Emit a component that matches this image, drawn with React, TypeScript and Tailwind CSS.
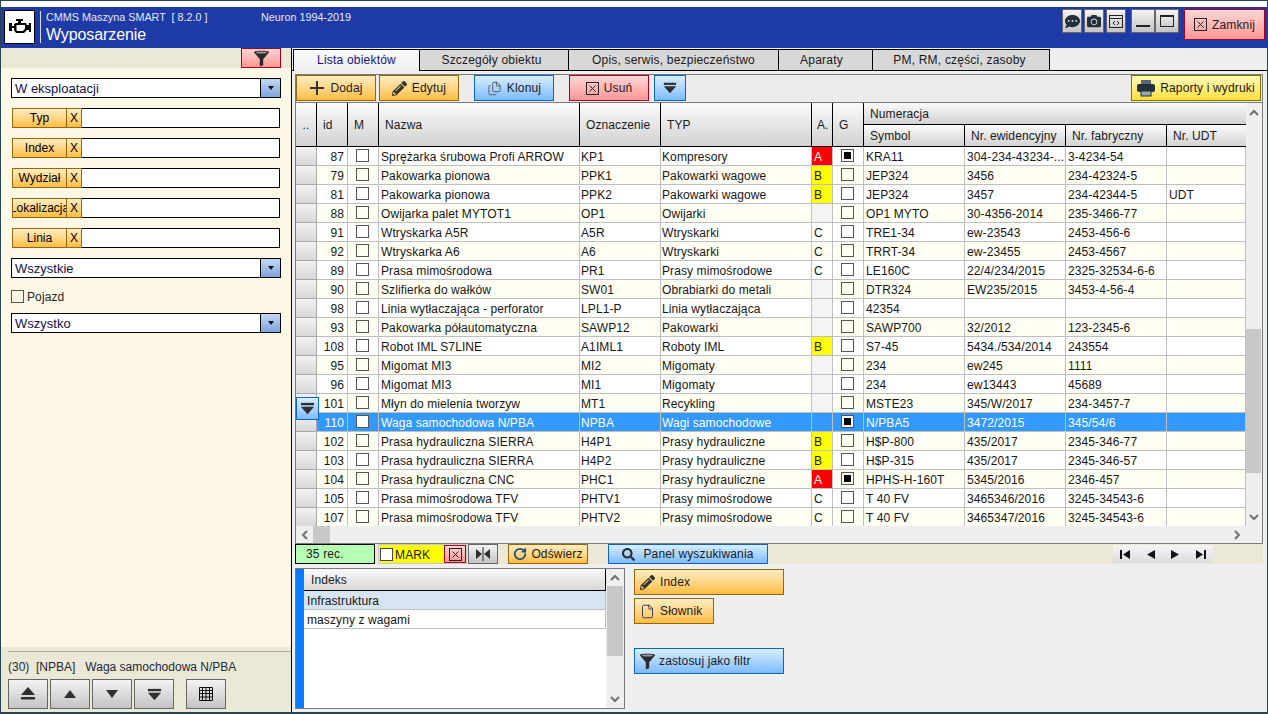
import { ReactNode } from 'react';
import { FaCamera, FaCommentDots, FaPencilAlt, FaSearch } from 'react-icons/fa';
import { File, Files, RotateCw } from 'lucide-react';

const orange = 'border border-[#96660f] bg-gradient-to-b from-[#ffedc0] to-[#ffbd3a]';
const blue = 'border border-[#0b66c2] bg-gradient-to-b from-[#d8eeff] to-[#7dbbff]';
const red = 'border border-[#a8001e] bg-gradient-to-b from-[#ffd6d6] to-[#ff9696]';
const gray = 'border border-[#666666] bg-gradient-to-b from-[#f4f4f4] to-[#c4c4c4]';
const headCell = 'border-r border-b border-black bg-gradient-to-b from-[#fbfbfb] to-[#d2d2d2] flex items-center whitespace-nowrap overflow-hidden';

const columns = 'grid grid-cols-[21px_31px_31px_201px_81px_151px_21px_31px_101px_101px_101px_79px]';

type Row = [string, string, string, string, string, boolean, string, string, string, string?];

const rows: Row[] = [
  ['87', 'Sprężarka śrubowa Profi ARROW', 'KP1', 'Kompresory', 'A', true, 'KRA11', '304-234-43234-...', '3-4234-54'],
  ['79', 'Pakowarka pionowa', 'PPK1', 'Pakowarki wagowe', 'B', false, 'JEP324', '3456', '234-42324-5'],
  ['81', 'Pakowarka pionowa', 'PPK2', 'Pakowarki wagowe', 'B', false, 'JEP324', '3457', '234-42344-5', 'UDT'],
  ['88', 'Owijarka palet MYTOT1', 'OP1', 'Owijarki', '', false, 'OP1 MYTO', '30-4356-2014', '235-3466-77'],
  ['91', 'Wtryskarka A5R', 'A5R', 'Wtryskarki', 'C', false, 'TRE1-34', 'ew-23543', '2453-456-6'],
  ['92', 'Wtryskarka A6', 'A6', 'Wtryskarki', 'C', false, 'TRRT-34', 'ew-23455', '2453-4567'],
  ['89', 'Prasa mimośrodowa', 'PR1', 'Prasy mimośrodowe', 'C', false, 'LE160C', '22/4/234/2015', '2325-32534-6-6'],
  ['90', 'Szlifierka do wałków', 'SW01', 'Obrabiarki do metali', '', false, 'DTR324', 'EW235/2015', '3453-4-56-4'],
  ['98', 'Linia wytłaczająca - perforator', 'LPL1-P', 'Linia wytłaczająca', '', false, '42354', '', ''],
  ['93', 'Pakowarka półautomatyczna', 'SAWP12', 'Pakowarki', '', false, 'SAWP700', '32/2012', '123-2345-6'],
  ['108', 'Robot IML S7LINE', 'A1IML1', 'Roboty IML', 'B', false, 'S7-45', '5434./534/2014', '243554'],
  ['95', 'Migomat MI3', 'MI2', 'Migomaty', '', false, '234', 'ew245', '1111'],
  ['96', 'Migomat MI3', 'MI1', 'Migomaty', '', false, '234', 'ew13443', '45689'],
  ['101', 'Młyn do mielenia tworzyw', 'MT1', 'Recykling', '', false, 'MSTE23', '345/W/2017', '234-3457-7'],
  ['110', 'Waga samochodowa N/PBA', 'NPBA', 'Wagi samochodowe', '', true, 'N/PBA5', '3472/2015', '345/54/6'],
  ['102', 'Prasa hydrauliczna SIERRA', 'H4P1', 'Prasy hydrauliczne', 'B', false, 'H$P-800', '435/2017', '2345-346-77'],
  ['103', 'Prasa hydrauliczna SIERRA', 'H4P2', 'Prasy hydrauliczne', 'B', false, 'H$P-315', '435/2017', '2345-346-57'],
  ['104', 'Prasa hydrauliczna CNC', 'PHC1', 'Prasy hydrauliczne', 'A', true, 'HPHS-H-160T', '5345/2016', '2346-457'],
  ['105', 'Prasa mimośrodowa TFV', 'PHTV1', 'Prasy mimośrodowe', 'C', false, 'T 40 FV', '3465346/2016', '3245-34543-6'],
  ['107', 'Prasa mimośrodowa TFV', 'PHTV2', 'Prasy mimośrodowe', 'C', false, 'T 40 FV', '3465347/2016', '3245-34543-6'],
];

function Funnel({ size = 20 }: { size?: number }) {
  return (
    <svg width={size} height={size} viewBox="0 0 20 20">
      <path d="M1 2.5 C1 0.5 19 0.5 19 2.5 L12 11 L12 18 L8 19.5 L8 11 Z" fill="#2b2b2b" />
      <ellipse cx="10" cy="3" rx="6.5" ry="1.2" fill="#9a9a9a" />
    </svg>
  );
}

function BoxX() {
  return (
    <svg width="13" height="13" viewBox="0 0 13 13" fill="none" stroke="#222222">
      <rect x="0.5" y="0.5" width="12" height="12" />
      <path d="M3.5 3.5 L9.5 9.5 M9.5 3.5 L3.5 9.5" />
    </svg>
  );
}

// bar + triangle, used for the "last" and dropdown buttons
function BarDown({ size = 16 }: { size?: number }) {
  return (
    <svg width={size} height={size} viewBox="0 0 16 16" fill="#2f2f2f">
      <rect x="1" y="2" width="14" height="2.5" />
      <path d="M1 6 H15 L8 14 Z" />
    </svg>
  );
}

function Tri({ dir }: { dir: 'up' | 'down' }) {
  return (
    <svg width="12" height="8" viewBox="0 0 12 8" fill="#2f2f2f">
      <path d={dir === 'up' ? 'M0 8 L6 0 L12 8 Z' : 'M0 0 H12 L6 8 Z'} />
    </svg>
  );
}

function Chevron({ dir }: { dir: 'up' | 'down' | 'left' | 'right' }) {
  const d = {
    up: 'M1 6 L5 2 L9 6',
    down: 'M1 2 L5 6 L9 2',
    left: 'M6 1 L2 5 L6 9',
    right: 'M2 1 L6 5 L2 9',
  }[dir];
  return (
    <svg width="10" height="10" viewBox="0 0 10 10" fill="none" stroke="#707070" strokeWidth="2">
      <path d={d} transform={dir === 'left' || dir === 'right' ? 'translate(1 0)' : 'translate(0 1)'} />
    </svg>
  );
}

function Printer() {
  return (
    <svg width="18" height="18" viewBox="0 0 18 18">
      <rect x="4" y="1" width="10" height="5" fill="#5c6670" />
      <rect x="0" y="5" width="18" height="8" rx="2" fill="#23303c" />
      <rect x="4" y="12" width="10" height="5" fill="#9aa4ae" stroke="#23303c" />
    </svg>
  );
}

function Check({ checked, white }: { checked?: boolean; white?: boolean }) {
  return (
    <span className={`w-[13px] h-[13px] shrink-0 border border-[#555555] flex items-center justify-center ${white ? 'bg-white' : ''}`}>
      {checked && <span className="w-[7px] h-[7px] bg-black" />}
    </span>
  );
}

function Select({ value }: { value: string }) {
  return (
    <div className="h-5 border border-black bg-white flex items-stretch text-[13px] leading-[19px]">
      <span className="flex-1 pl-[3px] text-[#10104a]">{value}</span>
      <span className="w-5 border-l border-black bg-gradient-to-b from-[#c4d8f4] to-[#7ea5df] flex items-center justify-center">
        <svg width="6" height="4" viewBox="0 0 6 4" fill="#111111"><path d="M0 0 H6 L3 4 Z" /></svg>
      </span>
    </div>
  );
}

function Filter({ label }: { label: string }) {
  return (
    <div className="h-5 mx-px flex items-stretch text-[12px] leading-[18px]">
      <span className={`w-[55px] ${orange} text-center overflow-hidden whitespace-nowrap flex justify-center`}>{label}</span>
      <span className={`w-[16px] -ml-px ${orange} text-center`}>X</span>
      <span className="flex-1 border border-black border-l-0 bg-white" />
    </div>
  );
}

function Btn({ cls, w, icon, children }: { cls: string; w: string; icon?: ReactNode; children?: ReactNode }) {
  return (
    <button className={`${cls} ${w} h-[26px] flex items-center justify-center gap-[5px] text-[12px] tracking-[0.15px] text-[#1a1a1a]`}>
      {icon}
      {children}
    </button>
  );
}

function SideBtn({ children }: { children: ReactNode }) {
  return <button className={`${gray} w-10 h-[30px] flex items-center justify-center`}>{children}</button>;
}

function Tab({ label, w, active }: { label: string; w: string; active?: boolean }) {
  return (
    <div
      className={`${w} border-t border-r border-black text-center leading-[20px] text-[12px] tracking-[0.2px] ${
        active
          ? 'h-[22px] -mb-px bg-gradient-to-b from-[#fbfbfb] to-[#efefef] text-[#14147c] relative'
          : 'h-[21px] bg-[#d8d8d8] text-[#1a1a1a]'
      }`}
    >
      {label}
    </div>
  );
}

function TableRow({ row, index }: { row: Row; index: number }) {
  const [id, name, mark, type, cat, g, symbol, ew, fab, udt] = row;
  const selected = id === '110';
  const rowCls = selected ? 'bg-[#3399ff] text-white' : index % 2 === 1 ? 'bg-[#fffff4] text-[#161616]' : 'bg-white text-[#161616]';
  const border = 'border-r border-b border-[#bfbfbf] whitespace-nowrap overflow-hidden';
  const cell = `${border} pl-[2px]`;
  const catCls =
    cat === 'A' ? 'bg-[#ff0000] text-white' : cat === 'B' ? 'bg-[#ffff00] text-[#161616]' : cat === '' && !selected ? 'bg-[#f4f4f4]' : '';
  return (
    <div className={`${columns} ${rowCls} h-[19px] text-[12px] leading-[20px] tracking-[0.1px]`}>
      <div className="border-r border-b border-[#a8a8a8] bg-gradient-to-b from-[#f2f2f2] to-[#d8d8d8]" />
      <div className={`${border} text-right pr-[3px]`}>{id}</div>
      <div className={`${border} flex items-start justify-center pt-[2px] pr-px`}><Check white={selected} /></div>
      <div className={cell}>{name}</div>
      <div className={`${border} pl-px`}>{mark}</div>
      <div className={`${border} pl-px`}>{type}</div>
      <div className={`${cell} ${catCls}`}>{cat}</div>
      <div className={`${border} flex items-start justify-center pt-[2px] pr-px`}><Check checked={g} white={selected} /></div>
      <div className={cell}>{symbol}</div>
      <div className={cell}>{ew}</div>
      <div className={cell}>{fab}</div>
      <div className={cell}>{udt}</div>
    </div>
  );
}

export default function App() {
  return (
    <div className="w-[1268px] h-[714px] box-border border-t border-l border-r border-b-2 border-[#26444f] flex flex-col overflow-hidden font-['Liberation_Sans',Arial,sans-serif] text-[12px] bg-white">
      <div className="h-[6px] bg-white" />

      {/* Title bar */}
      <header className="h-[41px] bg-[#1e3aa6] flex items-start text-white">
        <div className="w-[31px] h-[34px] ml-[3px] mt-[3px] bg-white border border-black flex items-center justify-center">
          <svg width="24" height="18" viewBox="0 0 24 18" fill="#000000">
            <path d="M8 1 H15 V3 H13 V5 H18 L19 7 H21 V5 H23 V14 H21 V12 H19 L16 15 H8 L6 12 V10 H4 V13 H1 V5 H4 V8 H6 V6 L8 5 H10 V3 H8 Z M8.5 7 V12.5 L9.5 13 H15 L17 10.5 V7 Z" fillRule="evenodd" />
          </svg>
        </div>
        <div className="w-px h-8 ml-[5px] mt-1 bg-[#d8dcec]" />
        <div className="ml-[5px] mt-[4px] w-[215px]">
          <div className="text-[10.8px] leading-[12px] text-[#e4e8f6] whitespace-pre">CMMS Maszyna SMART  [ 8.2.0 ]</div>
          <div className="text-[16px] leading-[20px] mt-[2px] tracking-[-0.1px]">Wyposarzenie</div>
        </div>
        <div className="mt-[4px] text-[10.8px] leading-[12px] text-[#e4e8f6]">Neuron 1994-2019</div>
        <div className="ml-auto mr-[2px] mt-[2px] flex items-start">
          <button className={`${gray} w-5 h-6 flex items-center justify-center`}><FaCommentDots size={15} color="#23303c" /></button>
          <button className={`${gray} w-5 h-6 ml-[2px] flex items-center justify-center`}><FaCamera size={14} color="#23303c" /></button>
          <button className={`${gray} w-5 h-6 ml-[2px] flex items-center justify-center`}>
            <svg width="14" height="13" viewBox="0 0 14 13" fill="none" stroke="#222222">
              <rect x="0.5" y="0.5" width="13" height="12" />
              <path d="M0.5 3.5 H13.5 M6 6 L4 8 L6 10 M8 6 L10 8 L8 10" />
            </svg>
          </button>
          <button className={`${gray} w-6 h-6 ml-[5px] flex items-center justify-center`}>
            <span className="w-[14px] h-[2px] bg-[#222222] mt-[10px]" />
          </button>
          <button className={`${gray} w-6 h-6 flex items-center justify-center`}>
            <span className="w-[14px] h-3 border border-[#222222] border-t-2" />
          </button>
          <button className={`${red} w-[81px] h-[31px] ml-[5px] flex items-center justify-center gap-[5px] text-[12px] tracking-[0.15px] text-[#222222]`}>
            <BoxX />
            Zamknij
          </button>
        </div>
      </header>

      <div className="flex-1 flex min-h-0">
        {/* Filter sidebar */}
        <aside className="w-[290px] flex flex-col bg-[#fdf8e6]">
          <div className="h-5 bg-[#ebe8d6] flex justify-end pr-[10px]">
            <button className={`${red} w-10 h-5 flex items-center justify-center`}><Funnel size={17} /></button>
          </div>
          <div className="flex-1 px-[10px] pt-[10px] flex flex-col gap-[10px]">
            <Select value="W eksploatacji" />
            <Filter label="Typ" />
            <Filter label="Index" />
            <Filter label="Wydział" />
            <Filter label="Lokalizacja" />
            <Filter label="Linia" />
            <Select value="Wszystkie" />
            <label className="h-[13px] mt-[2px] flex items-center gap-[3px] text-[12px] tracking-[0.1px] text-[#222222]">
              <Check />
              Pojazd
            </label>
            <Select value="Wszystko" />
          </div>
          <div className="h-[65px] bg-[#ebe8d6] pl-[7px] pt-1">
            <div className="h-px bg-[#a8a8a0]" />
            <div className="mt-[8px] h-[14px] leading-[14px] text-[12px] text-[#1e2840] whitespace-pre">(30)  [NPBA]   Waga samochodowa N/PBA</div>
            <div className="mt-[5px] flex gap-[2px]">
              <SideBtn>
                <svg width="14" height="14" viewBox="0 0 14 14" fill="#2f2f2f"><path d="M0 8 L7 0 L14 8 Z" /><rect y="10" width="14" height="2.5" /></svg>
              </SideBtn>
              <SideBtn><Tri dir="up" /></SideBtn>
              <SideBtn><Tri dir="down" /></SideBtn>
              <SideBtn><BarDown size={15} /></SideBtn>
              <button className={`${gray} w-10 h-[30px] ml-[10px] flex items-center justify-center`}>
                <svg width="14" height="14" viewBox="0 0 14 14" fill="none" stroke="#111111">
                  <path d="M0.5 0.5 H13.5 V13.5 H0.5 Z M0.5 3.5 H13.5 M0.5 6.5 H13.5 M0.5 10 H13.5 M3.5 0.5 V13.5 M7 0.5 V13.5 M10.5 0.5 V13.5" />
                </svg>
              </button>
            </div>
          </div>
        </aside>

        {/* Main panel */}
        <main className="flex-1 min-w-0 border-l border-black bg-[#efefef] flex flex-col">
          <div className="h-[23px] border-b border-black pl-px pt-px flex items-start">
            <Tab label="Lista obiektów" w="w-[127px] border-l" active />
            <Tab label="Szczegóły obiektu" w="w-[149px] pr-[5px]" />
            <Tab label="Opis, serwis, bezpieczeństwo" w="w-[210px]" />
            <Tab label="Aparaty" w="w-[94px] pr-[8px]" />
            <Tab label="PM, RM, części, zasoby" w="w-[177px] pr-[3px]" />
          </div>

          <div className="ml-[3px] mt-[3px] w-[968px] h-[470px] border border-[#7a7a7a] flex flex-col">
            {/* Toolbar */}
            <div className="h-[28px] border-b border-[#7a7a7a] bg-[#eeecea] flex items-start">
              <Btn cls={orange} w="w-20" icon={<svg width="16" height="16" viewBox="0 0 16 16" fill="#333333"><path d="M7 1 H9 V7 H15 V9 H9 V15 H7 V9 H1 V7 H7 Z" /></svg>}>Dodaj</Btn>
              <Btn cls={`${orange} ml-[3px]`} w="w-20" icon={<FaPencilAlt size={15} color="#333333" />}>Edytuj</Btn>
              <Btn cls={`${blue} ml-[15px]`} w="w-20" icon={<Files size={15} color="#555555" strokeWidth={1.5} />}>Klonuj</Btn>
              <Btn cls={`${red} ml-[15px]`} w="w-20" icon={<BoxX />}>Usuń</Btn>
              <Btn cls={`${blue} ml-[5px]`} w="w-8" icon={<BarDown size={14} />} />
              <Btn cls="border border-[#75750a] bg-gradient-to-b from-[#fffab4] to-[#ffdf2e] ml-auto mr-px" w="w-[130px]" icon={<Printer />}>Raporty i wydruki</Btn>
            </div>

            <div className="flex h-[423px] relative">
              <div className="w-[950px] flex flex-col">
                {/* Column headers */}
                <div className={`${columns} grid-rows-[22px_22px] text-[12px] tracking-[0.1px] text-[#1a1a1a]`}>
                  <div className={`${headCell} row-span-2 justify-center`}>..</div>
                  <div className={`${headCell} row-span-2 pl-[6px]`}>id</div>
                  <div className={`${headCell} row-span-2 pl-[6px]`}>M</div>
                  <div className={`${headCell} row-span-2 pl-[6px]`}>Nazwa</div>
                  <div className={`${headCell} row-span-2 pl-[6px]`}>Oznaczenie</div>
                  <div className={`${headCell} row-span-2 pl-[6px]`}>TYP</div>
                  <div className={`${headCell} row-span-2 pl-[5px]`}>A.</div>
                  <div className={`${headCell} row-span-2 pl-[6px]`}>G</div>
                  <div className={`${headCell} col-span-4 pl-[6px] border-r-0`}>Numeracja</div>
                  <div className={`${headCell} pl-[6px]`}>Symbol</div>
                  <div className={`${headCell} pl-[6px]`}>Nr. ewidencyjny</div>
                  <div className={`${headCell} pl-[6px]`}>Nr. fabryczny</div>
                  <div className={`${headCell} pl-[6px] border-r-0`}>Nr. UDT</div>
                </div>
                <div className="h-[379px] overflow-hidden bg-white">
                  {rows.map((row, i) => (
                    <TableRow key={row[0]} row={row} index={i} />
                  ))}
                </div>
              </div>

              {/* Vertical scrollbar */}
              <div className="w-4 flex flex-col items-stretch bg-[#efefef]">
                <div className="h-[226px] pt-[5px] flex justify-center"><Chevron dir="up" /></div>
                <div className="h-[144px] bg-[#c8c8c8] mr-px" />
                <div className="flex-1 flex items-end justify-center pb-[4px]"><Chevron dir="down" /></div>
              </div>

              {/* Current row marker */}
              <button className={`${blue} absolute left-0 top-[294px] w-[23px] h-[23px] flex items-center justify-center`}>
                <BarDown size={15} />
              </button>
            </div>

            {/* Horizontal scrollbar */}
            <div className="h-[17px] flex items-center bg-[#efefef]">
              <span className="ml-[4px]"><Chevron dir="left" /></span>
              <span className="ml-[3px] w-[17px] h-[17px] bg-[#c8c8c8]" />
              <span className="ml-auto mr-[20px]"><Chevron dir="right" /></span>
            </div>
          </div>

          {/* Status strip */}
          <div className="ml-[3px] w-[968px] h-5 bg-[#ebe8d6] flex items-start text-[12px] tracking-[0.15px] text-[#1a1a1a]">
            <div className="w-20 h-5 border border-black bg-[#b5ffb5] pl-[10px] leading-[18px]">35 rec.</div>
            <div className="ml-[3px] w-[89px] h-5 border border-[#c8c8c8] bg-[#ffff00] flex items-center">
              <span className="w-[13px] h-[13px] ml-[1px] border border-[#444444] bg-white" />
              <span className="ml-[2px] pt-px">MARK</span>
              <span className={`ml-auto w-[22px] h-[18px] ${red} flex items-center justify-center`}><BoxX /></span>
            </div>
            <button className={`${gray} w-[30px] h-5 ml-px flex items-center justify-center`}>
              <svg width="14" height="14" viewBox="0 0 14 14" fill="#2f2f2f"><path d="M0 2 L6 7 L0 12 Z M14 2 L8 7 L14 12 Z" /><rect x="6.5" y="0" width="1" height="14" /></svg>
            </button>
            <button className={`${orange} w-20 h-5 ml-[10px] flex items-center justify-center gap-[4px]`}>
              <RotateCw size={14} color="#1f4a7c" strokeWidth={3} />
              Odświerz
            </button>
            <button className={`${blue} w-[160px] h-5 ml-5 flex items-center justify-center gap-[8px]`}>
              <FaSearch size={13} color="#2b2b2b" />
              Panel wyszukiwania
            </button>
            <div className="ml-auto mr-[50px] mt-px w-[100px] h-[18px] bg-gradient-to-b from-[#f6f6f6] to-[#dcdcdc] flex items-center justify-between px-[7px]">
              <svg width="10" height="9" viewBox="0 0 10 9" fill="#111111"><path d="M0 0 H2 V9 H0 Z M10 0 V9 L3 4.5 Z" /></svg>
              <svg width="9" height="9" viewBox="0 0 9 9" fill="#111111"><path d="M9 0 V9 L1 4.5 Z" /></svg>
              <svg width="9" height="9" viewBox="0 0 9 9" fill="#111111"><path d="M0 0 V9 L8 4.5 Z" /></svg>
              <svg width="10" height="9" viewBox="0 0 10 9" fill="#111111"><path d="M0 0 V9 L7 4.5 Z M8 0 H10 V9 H8 Z" /></svg>
            </div>
          </div>

          {/* Lower panel */}
          <div className="flex-1 pl-[3px] pt-1 flex items-start">
            <div className="w-[330px] h-[141px] border border-[#7a7a7a] flex">
              <div className="w-2 bg-[#0a7cff]" />
              <div className="w-[302px] bg-white flex flex-col">
                <div className="h-[22px] border-b border-r border-black bg-gradient-to-b from-[#fbfbfb] to-[#d8d8d8] pl-[7px] leading-[22px] text-[12px] tracking-[0.1px] text-[#1a1a1a]">Indeks</div>
                <div className="h-[19px] border-b border-r border-[#bfbfbf] bg-[#d7e4f1] pl-[3px] leading-[20px] text-[12px] tracking-[0.1px] text-[#161616]">Infrastruktura</div>
                <div className="h-[19px] border-b border-r border-[#bfbfbf] bg-white pl-[3px] leading-[20px] text-[12px] tracking-[0.1px] text-[#161616]">maszyny z wagami</div>
              </div>
              <div className="flex-1 bg-[#efefef] flex flex-col">
                <div className="h-[17px] flex items-center justify-center"><Chevron dir="up" /></div>
                <div className="h-[70px] mx-px bg-[#c8c8c8]" />
                <div className="flex-1 flex items-end justify-center pb-[4px]"><Chevron dir="down" /></div>
              </div>
            </div>
            <div className="ml-[9px] flex flex-col items-start text-[12px] tracking-[0.15px] text-[#1a1a1a]">
              <button className={`${orange} w-[150px] h-[26px] mt-px pl-[5px] flex items-center gap-[5px]`}>
                <FaPencilAlt size={15} color="#333333" />
                Index
              </button>
              <button className={`${orange} w-20 h-[26px] mt-[3px] pl-[5px] flex items-center gap-[5px]`}>
                <File size={15} color="#2b3a55" strokeWidth={1.5} />
                Słownik
              </button>
              <button className={`${blue} w-[150px] h-[26px] mt-[24px] pl-[4px] flex items-center gap-[3px]`}>
                <Funnel size={17} />
                zastosuj jako filtr
              </button>
            </div>
          </div>
        </main>
      </div>
    </div>
  );
}
